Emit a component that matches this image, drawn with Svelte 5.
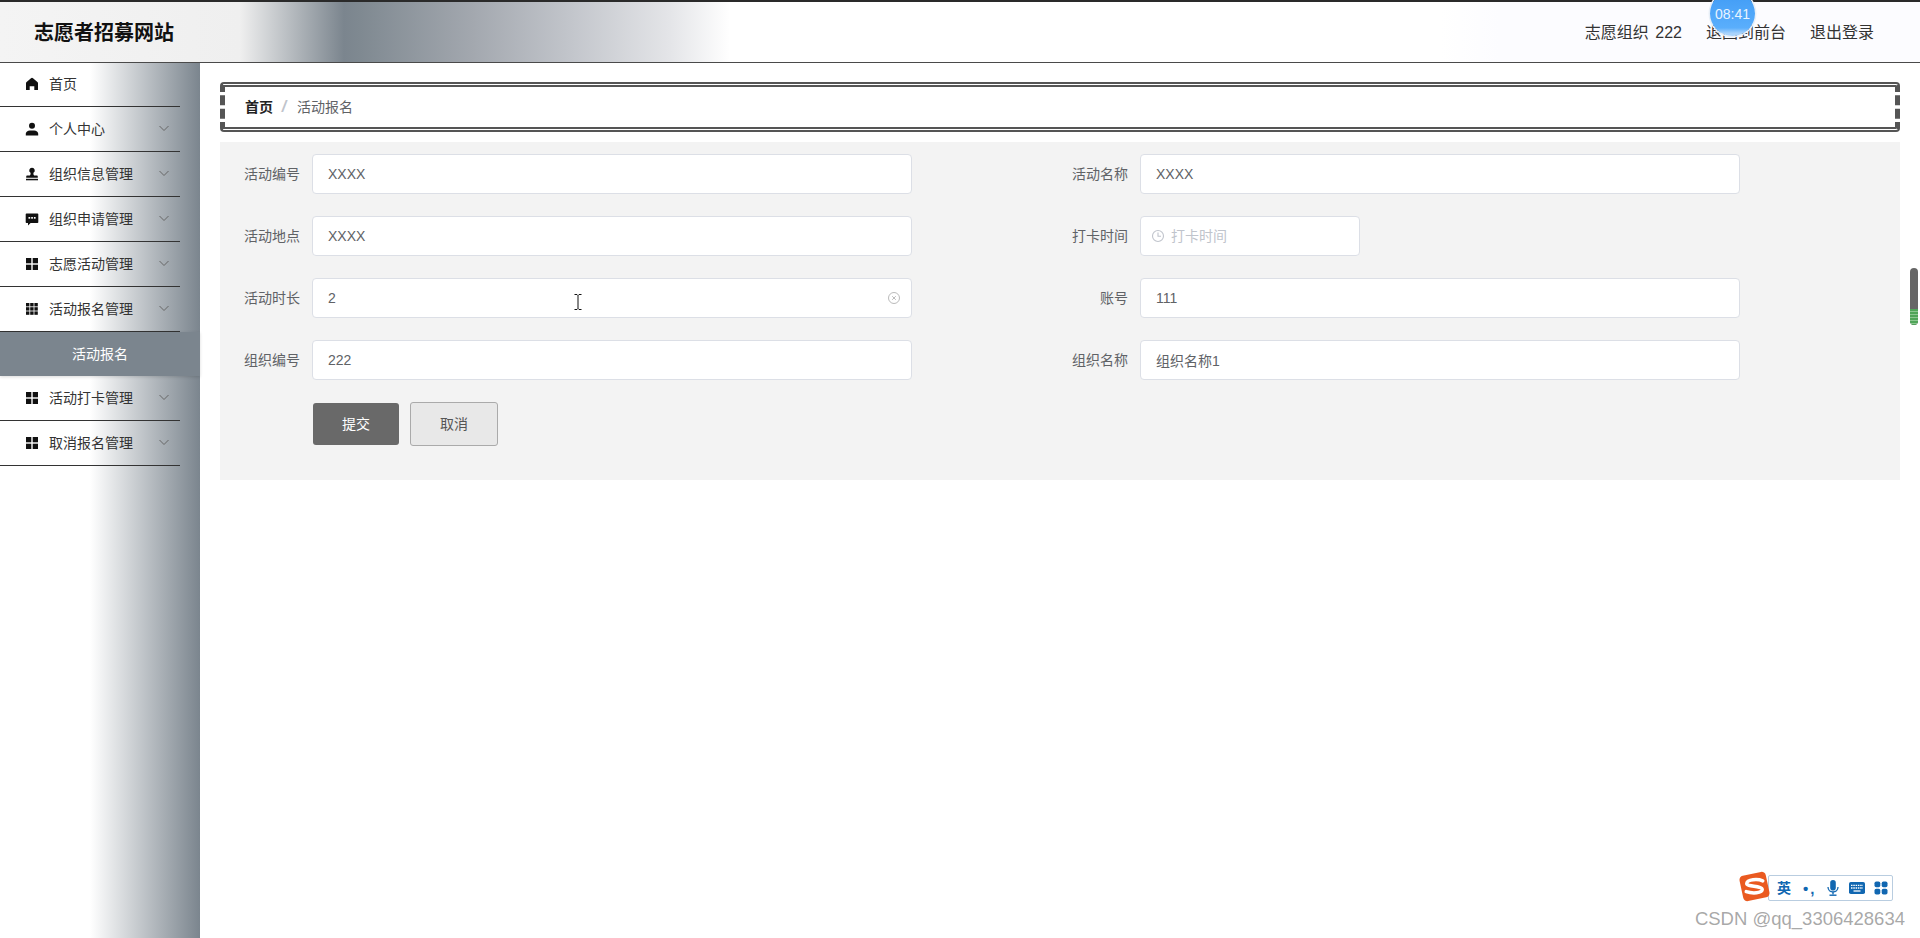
<script>
  const menu = [
    { label: '首页', icon: 'home', chevron: false },
    { label: '个人中心', icon: 'user', chevron: true },
    { label: '组织信息管理', icon: 'stamp', chevron: true },
    { label: '组织申请管理', icon: 'chat', chevron: true },
    { label: '志愿活动管理', icon: 'grid', chevron: true },
    { label: '活动报名管理', icon: 'grid3', chevron: true, sub: '活动报名' },
    { label: '活动打卡管理', icon: 'grid', chevron: true },
    { label: '取消报名管理', icon: 'grid', chevron: true }
  ];
  const fields = [
    { label: '活动编号', value: 'XXXX' },
    { label: '活动名称', value: 'XXXX' },
    { label: '活动地点', value: 'XXXX' },
    { label: '打卡时间', placeholder: '打卡时间', time: true },
    { label: '活动时长', value: '2', clear: true },
    { label: '账号', value: '111' },
    { label: '组织编号', value: '222' },
    { label: '组织名称', value: '组织名称1' }
  ];
</script>

<div class="page">
  <header class="header">
    <div class="title">志愿者招募网站</div>
    <nav class="links">
      <span class="who">志愿组织 222</span>
      <span>退回到前台</span>
      <span>退出登录</span>
    </nav>
  </header>

  <div class="body">
    <aside class="side">
      {#each menu as item}
        <div class="item">
          <svg class="icon" viewBox="0 0 14 14" aria-hidden="true">
            {#if item.icon === 'home'}
              <path d="M7 .8C6.6.8 6.3 1 6 1.200L1.600 5C1.200 5.300 1 5.800 1 6.300V13h3.700V9.300h4.600V13H13V6.300c0-.5-.2-1-.6-1.300L8 1.200C7.700 1 7.400.8 7 .8z" />
            {:else if item.icon === 'user'}
              <circle cx="7" cy="3.800" r="3" />
              <path d="M.8 13.500v-1.700c0-2 1.900-3.300 4-3.300h4.400c2.100 0 4 1.300 4 3.300v1.700z" />
            {:else if item.icon === 'stamp'}
              <path d="M7 .8a2.700 2.700 0 0 0-1.500 5c.3.900 0 2-.7 2.800H2.400C1.600 8.600 1.200 9 1.200 9.800v.9h11.600v-.9c0-.8-.4-1.200-1.200-1.200H9.200c-.7-.8-1-1.900-.7-2.800A2.700 2.700 0 0 0 7 .8z" />
              <rect x="1" y="11.800" width="12" height="1.500" />
            {:else if item.icon === 'chat'}
              <path d="M1.500 1.500h11c.5 0 .8.300.8.800v8c0 .5-.3.800-.8.800H5.600L3 13.500v-2.400H1.500c-.5 0-.8-.3-.8-.8v-8c0-.5.3-.8.8-.8z" />
              <g fill="#fff"><rect x="3.500" y="5" width="1.700" height="1.700" /><rect x="6.200" y="5" width="1.700" height="1.700" /><rect x="8.900" y="5" width="1.700" height="1.700" /></g>
            {:else if item.icon === 'grid'}
              <rect x="1" y="1" width="5.300" height="5.300" /><rect x="7.700" y="1" width="5.300" height="5.300" />
              <rect x="1" y="7.700" width="5.300" height="5.300" /><rect x="7.700" y="7.700" width="5.300" height="5.300" />
            {:else}
              {#each [1, 5.200, 9.400] as y}
                {#each [1, 5.200, 9.400] as x}
                  <rect {x} {y} width="3.400" height="3.400" />
                {/each}
              {/each}
            {/if}
          </svg>
          <span class="label">{item.label}</span>
          {#if item.chevron}
            <svg class="chev" viewBox="0 0 12 12" aria-hidden="true"><path d="M1.500 4l4.500 4.500L10.500 4" /></svg>
          {/if}
        </div>
        {#if item.sub}
          <div class="sub"><span>{item.sub}</span></div>
        {/if}
      {/each}
    </aside>

    <main class="main">
      <div class="crumb">
        <b>首页</b><i>/</i><span>活动报名</span>
      </div>

      <form class="form">
        {#each fields as f}
          <div class="field">
            <span class="flabel">{f.label}</span>
            <div class="input" class:time={f.time}>
              {#if f.time}
                <svg class="clock" viewBox="0 0 14 14" aria-hidden="true"><circle cx="7" cy="7" r="5.500" /><path d="M7 3.500V7.300h3" /></svg>
                <span class="ph">{f.placeholder}</span>
              {:else}
                <span>{f.value}</span>
              {/if}
              {#if f.clear}
                <svg class="clear" viewBox="0 0 14 14" aria-hidden="true"><circle cx="7" cy="7" r="5.500" /><path d="M5.200 5.200l3.600 3.600M8.800 5.200l-3.600 3.600" /></svg>
              {/if}
            </div>
          </div>
        {/each}
        <div class="actions">
          <button type="button" class="btn submit">提交</button>
          <button type="button" class="btn cancel">取消</button>
        </div>
      </form>
    </main>
  </div>

  <div class="clock-bubble">08:41</div>

  <svg class="cursor" viewBox="0 0 8 16" aria-hidden="true"><path d="M.5.500h2.500L4 1.500l1-1h2.500M4 1.500v13M.5 15.500H3l1-1 1 1h2.500" /></svg>

  <div class="scroll"><div class="scroll-green"></div></div>

  <div class="ime">
    <svg class="ime-logo" viewBox="0 0 32 30" aria-hidden="true">
      <rect x="3" y="2.500" width="26" height="25" rx="4" fill="#ea5a20" transform="rotate(-12 16 15)" />
      <path d="M24 9.500C19 7.500 9 8 8.500 12c-.4 3.500 15 2 15 6 0 3.500-9.500 4-15.500 2" fill="none" stroke="#fff" stroke-width="3.400" stroke-linecap="round" />
    </svg>
    <div class="ime-bar">
      <b>英</b>
      <span class="punct">•,</span>
      <svg viewBox="0 0 12 16" class="ime-i"><rect x="3.200" y="0" width="5.600" height="10.500" rx="2.800" /><path d="M1 7c0 6.500 10 6.500 10 0" fill="none" stroke="#1167b1" stroke-width="1.300" /><rect x="5.300" y="12" width="1.400" height="2.500" /><rect x="2.500" y="14.500" width="7" height="1.400" /></svg>
      <svg viewBox="0 0 16 12" class="ime-k"><rect x="0" y="0" width="16" height="12" rx="1.800" /><path d="M2 3.300h12M2 6h12" stroke="#fff" stroke-width="1.300" stroke-dasharray="1.500 .8" /><path d="M4.500 9h7" stroke="#fff" stroke-width="1.300" /></svg>
      <svg viewBox="0 0 14 14" class="ime-g"><rect x="0.500" y="0.500" width="5.800" height="5.800" rx="1.800" /><rect x="7.700" y="0.500" width="5.800" height="5.800" rx="1.800" /><rect x="0.500" y="7.700" width="5.800" height="5.800" rx="1.800" /><rect x="7.700" y="7.700" width="5.800" height="5.800" rx="1.800" /></svg>
    </div>
  </div>

  <div class="mark">CSDN @qq_3306428634</div>
</div>

<style>
  :global(body) {
    margin: 0;
    overflow: hidden;
    background: #fff;
  }
  .page {
    position: relative;
    height: 938px;
    overflow: hidden;
    font-family: "Liberation Sans", "Noto Sans CJK SC", sans-serif;
    color: #333;
    font-size: 14px;
    display: flex;
    flex-direction: column;
  }
  .header {
    position: relative;
    z-index: 2;
    flex: none;
    box-sizing: border-box;
    height: 62px;
    border-top: 2px solid #2a2a2a;
    box-shadow: 0 1px 0 #4a4a4a;
    display: flex;
    align-items: center;
    justify-content: space-between;
    padding: 0 46px 0 34px;
    background:
      linear-gradient(90deg, rgba(250, 250, 255, 0) 1440px, #fcfcff 1500px),
      linear-gradient(90deg, #f4f4f4 0, #efefef 240px, #7b858e 344px, #7f8991 360px, #a2a7ae 470px, #c2c5cb 570px, #e4e5e8 670px, #fff 730px);
  }
  .title {
    font-size: 20px;
    font-weight: 700;
    color: #111;
    line-height: 1;
    padding-top: 2px;
  }
  .links {
    display: flex;
    gap: 24px;
    font-size: 16px;
    color: #333;
    padding-bottom: 2px;
  }
  .who {
    word-spacing: 2px;
  }
  .body {
    flex: 1;
    display: flex;
    min-height: 0;
  }
  .side {
    flex: none;
    width: 200px;
    background: linear-gradient(90deg, #fff 90px, #7b858e 200px);
  }
  .item {
    box-sizing: border-box;
    height: 45px;
    width: 180px;
    border-bottom: 1px solid #333;
    display: flex;
    align-items: center;
    padding-left: 25px;
    position: relative;
  }
  .icon {
    width: 14px;
    height: 14px;
    fill: #111;
    flex: none;
  }
  .label {
    margin-left: 10px;
    color: #333;
    font-size: 14px;
    padding-bottom: 2px;
  }
  .chev {
    position: absolute;
    left: 158px;
    top: 15px;
    width: 12px;
    height: 12px;
    fill: none;
    stroke: #666;
    stroke-width: 1;
  }
  .sub {
    height: 44px;
    background: #7b858e;
    color: #fff;
    font-size: 14px;
    display: flex;
    align-items: center;
    padding-left: 72px;
    box-shadow: 0 1px 3px rgba(0, 0, 0, .15);
    position: relative;
  }
  .sub span {
    padding-bottom: 2px;
  }
  .main {
    flex: 1;
    min-width: 0;
    padding: 20px 20px 0;
  }
  .crumb {
    box-sizing: border-box;
    height: 50px;
    border: 5px double #555;
    border-left-style: dashed;
    border-right-style: dashed;
    border-radius: 4px;
    display: flex;
    align-items: center;
    padding-left: 20px;
    font-size: 14px;
    color: #606266;
  }
  .crumb b {
    color: #222;
    font-weight: 700;
    padding-bottom: 2px;
  }
  .crumb span {
    padding-bottom: 2px;
  }
  .crumb i {
    width: 26px;
    text-align: center;
    font-size: 16px;
    color: #c0c4cc;
    font-style: italic;
    font-weight: 700;
    margin-left: -2px;
  }
  .form {
    margin-top: 10px;
    background: #f3f3f3;
    height: 338px;
    box-sizing: border-box;
    padding-top: 12px;
    display: grid;
    grid-template-columns: 828px 1fr;
    grid-auto-rows: 40px;
    row-gap: 22px;
  }
  .field {
    display: flex;
    align-items: center;
  }
  .flabel {
    box-sizing: border-box;
    width: 80px;
    margin-right: 12px;
    text-align: right;
    color: #606266;
    font-size: 14px;
    padding-bottom: 2px;
  }
  .input {
    position: relative;
    box-sizing: border-box;
    width: 600px;
    height: 40px;
    background: #fff;
    border: 1px solid #dcdfe6;
    border-radius: 4px;
    display: flex;
    align-items: center;
    padding: 0 15px;
    color: #606266;
    font-size: 14px;
  }
  .input.time {
    width: 220px;
    padding-left: 10px;
    gap: 6px;
  }
  .ph {
    color: #c0c4cc;
    padding-bottom: 2px;
  }
  .clock {
    width: 14px;
    height: 14px;
    fill: none;
    stroke: #c0c4cc;
    stroke-width: 1.100;
  }
  .clear {
    position: absolute;
    right: 10px;
    top: 12px;
    width: 14px;
    height: 14px;
    fill: none;
    stroke: #bbb;
    stroke-width: 1;
  }
  .actions {
    grid-column: 1 / -1;
    display: flex;
    align-items: center;
    gap: 11px;
    padding-left: 93px;
    padding-top: 4px;
  }
  .btn {
    box-sizing: border-box;
    font: inherit;
    font-size: 14px;
    border-radius: 3px;
    padding: 0 0 2px;
    flex: none;
  }
  .submit {
    width: 86px;
    height: 42px;
    background: #696969;
    border: none;
    color: #fff;
  }
  .cancel {
    width: 88px;
    height: 44px;
    background: #e8e8e8;
    border: 1px solid #aaa;
    color: #555;
  }
  .clock-bubble {
    position: absolute;
    z-index: 3;
    left: 1710px;
    top: -9px;
    width: 45px;
    height: 45px;
    border-radius: 50%;
    background: linear-gradient(180deg, #3f9bf5, #5aaefc 82%, #a9d3fb 94%);
    box-shadow: 0 0 0 1.500px #e8eff7;
    color: #e8f4ff;
    font-family: "Liberation Sans", sans-serif;
    font-size: 14px;
    display: flex;
    align-items: center;
    justify-content: center;
  }
  .cursor {
    position: absolute;
    left: 574px;
    top: 294px;
    width: 8px;
    height: 16px;
    fill: none;
    stroke: #111;
    stroke-width: 1;
  }
  .scroll {
    position: absolute;
    left: 1910px;
    top: 268px;
    width: 8px;
    height: 57px;
    border-radius: 4px;
    overflow: hidden;
    background: #666;
  }
  .scroll-green {
    position: absolute;
    left: 0;
    right: 0;
    bottom: 0;
    height: 16px;
    background: repeating-linear-gradient(180deg, #4fa558 0 2px, #8cc790 2px 3px);
  }
  .ime {
    position: absolute;
    left: 1738px;
    top: 871px;
    display: flex;
    align-items: flex-start;
  }
  .ime-logo {
    position: relative;
    z-index: 1;
    width: 33px;
    height: 31px;
    flex: none;
  }
  .ime-bar {
    box-sizing: border-box;
    margin-left: -3px;
    margin-top: 4px;
    width: 125px;
    height: 26px;
    background: #fff;
    border: 1px solid #b9cde0;
    border-radius: 2px;
    display: flex;
    align-items: center;
    padding-left: 8px;
    color: #1167b1;
    fill: #1167b1;
  }
  .ime-bar b {
    font-size: 14px;
    line-height: 1;
  }
  .punct {
    margin-left: 12px;
    width: 16px;
    font: 700 15px/1 "Liberation Sans", sans-serif;
    letter-spacing: 2px;
  }
  .ime-i {
    margin-left: 8px;
    width: 12px;
    height: 16px;
    flex: none;
  }
  .ime-k {
    margin-left: 10px;
    width: 16px;
    height: 12px;
    flex: none;
  }
  .ime-g {
    margin-left: 9px;
    width: 14px;
    height: 14px;
    flex: none;
  }
  .mark {
    position: absolute;
    right: 15px;
    top: 909px;
    font-family: "Liberation Sans", sans-serif;
    font-size: 18.500px;
    line-height: 20px;
    color: rgba(130, 130, 130, .7);
  }
</style>
